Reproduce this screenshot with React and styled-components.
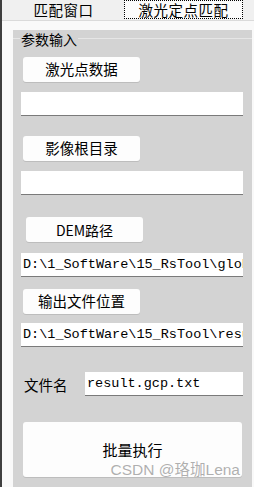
import React from 'react'
import styled, { createGlobalStyle } from 'styled-components'

const GlobalStyle = createGlobalStyle`
  html, body {
    margin: 0;
    padding: 0;
    background: #f9f9f9;
  }
  * { box-sizing: border-box; }
`

const cjk = `"Noto Sans CJK SC", "DejaVu Sans", sans-serif`
const mono = `"Liberation Mono", "Noto Sans CJK SC", monospace`

const Window = styled.div`
  width: 254px;
  height: 487px;
  display: flex;
  overflow: hidden;
  background: #f9f9f9;
  font-family: ${cjk};
  color: #000;
`

const LeftEdge = styled.div`
  width: 2px;
  background: #3f3f3f;
  flex-shrink: 0;
`

const Main = styled.div`
  flex: 1;
  display: flex;
  flex-direction: column;
`

const TabBar = styled.div`
  height: 21px;
  display: flex;
  background: #f0f0f0;
  border-bottom: 1px solid #dadada;
  flex-shrink: 0;
`

const Tab = styled.div`
  width: ${props => props.width}px;
  height: 19px;
  display: flex;
  align-items: center;
  justify-content: center;
  font-size: 14.5px;
  letter-spacing: 0.5px;
  line-height: 1;
  background: ${props => props.active ? '#fbfbfb' : '#f0f0f0'};
  border: ${props => props.active ? '1px dotted #000' : 'none'};
  margin-left: ${props => props.ml || 0}px;
  padding-top: 1px;
`

const Page = styled.div`
  flex: 1;
  padding: 9px 2px 0 11px;
  display: flex;
`

const Group = styled.div`
  flex: 1;
  background: #d3d3d3;
  display: flex;
  flex-direction: column;
  padding: 0 8px 0 8px;
`

const GroupHeader = styled.div`
  display: flex;
  align-items: center;
  height: 17px;
  margin-left: -8px;
  margin-right: -8px;
  &::before {
    content: '';
    width: 7px;
    height: 1px;
    background: #e6e6e6;
  }
  &::after {
    content: '';
    flex: 1;
    height: 1px;
    background: #e6e6e6;
  }
`

const GroupTitle = styled.span`
  font-size: 14px;
  line-height: 1;
  padding: 0 1px;
`

const Button = styled.div`
  width: ${props => props.width || 117}px;
  height: ${props => props.height || 25}px;
  margin-top: ${props => props.mt}px;
  margin-left: ${props => props.ml || 2}px;
  background: #fdfdfd;
  border-radius: 3px;
  box-shadow: 0 1px 0 #bdbdbd;
  display: flex;
  align-items: center;
  justify-content: center;
  font-size: ${props => props.size || 14.5}px;
  line-height: 1;
  flex-shrink: 0;
  position: relative;
`

const Field = styled.div`
  width: ${props => props.width || 222}px;
  height: 24px;
  margin-top: ${props => props.mt || 0}px;
  background: #fff;
  border-bottom: 1px solid #7a7a7a;
  display: flex;
  align-items: center;
  padding-left: 2px;
  font-family: ${mono};
  font-size: 13.5px;
  white-space: nowrap;
  overflow: hidden;
  flex-shrink: 0;
`

const Row = styled.div`
  display: flex;
  align-items: center;
  margin-top: ${props => props.mt}px;
`

const Label = styled.span`
  width: 64px;
  padding-left: 3px;
  font-size: 14.5px;
`

const Watermark = styled.span`
  position: absolute;
  right: 2px;
  bottom: 0;
  font-family: "Liberation Sans", "Noto Sans CJK SC", sans-serif;
  font-size: 15.5px;
  color: rgba(150, 150, 150, 0.75);
  white-space: nowrap;
`

export default function App() {
  return (
    <>
      <GlobalStyle />
      <Window>
        <LeftEdge />
        <Main>
          <TabBar>
            <Tab width={115} ml={4}>匹配窗口</Tab>
            <Tab width={119} ml={3} active>激光定点匹配</Tab>
          </TabBar>
          <Page>
            <Group>
              <GroupHeader><GroupTitle>参数输入</GroupTitle></GroupHeader>
              <Button mt={10}>激光点数据</Button>
              <Field mt={10} />
              <Button mt={20}>影像根目录</Button>
              <Field mt={10} />
              <Button mt={22} ml={5} size={14}>DEM路径</Button>
              <Field mt={11}>D:\1_SoftWare\15_RsTool\global</Field>
              <Button mt={12}>输出文件位置</Button>
              <Field mt={9}>D:\1_SoftWare\15_RsTool\result</Field>
              <Row mt={25}>
                <Label>文件名</Label>
                <Field width={158}>result.gcp.txt</Field>
              </Row>
              <Button mt={26} width={219} height={55} size={15}>
                批量执行
                <Watermark>CSDN @珞珈Lena</Watermark>
              </Button>
            </Group>
          </Page>
        </Main>
      </Window>
    </>
  )
}
